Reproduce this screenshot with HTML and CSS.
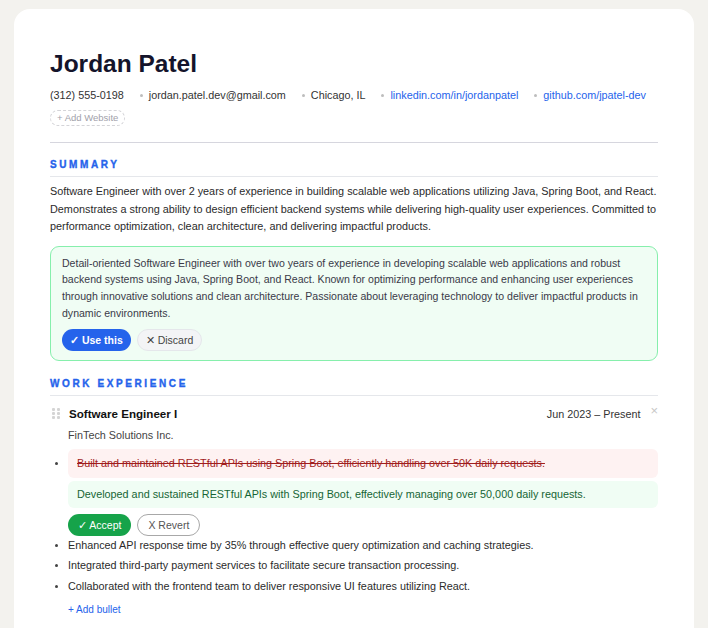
FILE: index.html
```html
<!DOCTYPE html>
<html>
<head>
<meta charset="utf-8">
<link rel="stylesheet" href="styles.css">
</head>
<body>
<div class="card">
  <h1 class="name">Jordan Patel</h1>
  <div class="contact">
    <span class="ci first">(312) 555-0198</span>
    <span class="ci">jordan.patel.dev@gmail.com</span>
    <span class="ci">Chicago, IL</span>
    <span class="ci link">linkedin.com/in/jordanpatel</span>
    <span class="ci link">github.com/jpatel-dev</span>
  </div>
  <div class="addsite">+ Add Website</div>
  <div class="rule"></div>

  <h2 class="sec">SUMMARY</h2>
  <p class="summary">Software Engineer with over 2 years of experience in building scalable web applications utilizing Java, Spring Boot, and React. Demonstrates a strong ability to design efficient backend systems while delivering high-quality user experiences. Committed to performance optimization, clean architecture, and delivering impactful products.</p>

  <div class="suggest">
    <p class="sug-text">Detail-oriented Software Engineer with over two years of experience in developing scalable web applications and robust backend systems using Java, Spring Boot, and React. Known for optimizing performance and enhancing user experiences through innovative solutions and clean architecture. Passionate about leveraging technology to deliver impactful products in dynamic environments.</p>
    <div class="btns">
      <span class="btn use">✓ Use this</span>
      <span class="btn discard">✕ Discard</span>
    </div>
  </div>

  <h2 class="sec">WORK EXPERIENCE</h2>
  <div class="job">
    <div class="job-head">
      <span class="grip"><i></i><i></i><i></i><i></i><i></i><i></i></span>
      <span class="title">Software Engineer I</span>
      <span class="date">Jun 2023 – Present</span>
      <span class="close">×</span>
    </div>
    <div class="company">FinTech Solutions Inc.</div>
    <ul class="bullets">
      <li class="edit">
        <div class="old">Built and maintained RESTful APIs using Spring Boot, efficiently handling over 50K daily requests.</div>
        <div class="new">Developed and sustained RESTful APIs with Spring Boot, effectively managing over 50,000 daily requests.</div>
        <div class="btns">
          <span class="btn accept">✓ Accept</span>
          <span class="btn revert">X Revert</span>
        </div>
      </li>
      <li>Enhanced API response time by 35% through effective query optimization and caching strategies.</li>
      <li>Integrated third-party payment services to facilitate secure transaction processing.</li>
      <li>Collaborated with the frontend team to deliver responsive UI features utilizing React.</li>
    </ul>
    <div class="addbullet">+ Add bullet</div>
  </div>
</div>
</body>
</html>
```

FILE: styles.css
```css
* { box-sizing: border-box; }
html, body { margin: 0; padding: 0; }
body {
  background: #f3f2ee;
  font-family: "Liberation Sans", Arial, sans-serif;
  color: #2b2b2b;
  height: 628px;
  overflow: hidden;
}
.card {
  margin: 9px 14px 0 14px;
  background: #ffffff;
  border-radius: 16px;
  padding: 41px 36px 40px 36px;
  min-height: 700px;
}
.name {
  margin: 0;
  font-size: 24.5px;
  line-height: 28px;
  font-weight: 700;
  color: #14142b;
}
.contact {
  display: flex;
  flex-wrap: wrap;
  gap: 16px;
  margin-top: 10px;
  font-size: 10.8px;
  line-height: 14px;
  color: #333;
  white-space: nowrap;
}
.ci { display: inline-flex; align-items: center; }
.ci:not(.first)::before {
  content: "";
  width: 3px;
  height: 3px;
  border-radius: 50%;
  background: #bdbdbd;
  margin-right: 6px;
}
.link { color: #2563eb; }
.addsite {
  display: inline-block;
  margin-top: 8px;
  border: 1px dashed #d4d4d8;
  border-radius: 9px;
  font-size: 9.5px;
  line-height: 14px;
  padding: 0 6px;
  color: #a1a1aa;
}
.rule {
  height: 1px;
  background: #d6d6de;
  margin-top: 16px;
}
.sec {
  margin: 16px 0 0 0;
  font-size: 10px;
  line-height: 12px;
  font-weight: 900;
  letter-spacing: 2.6px;
  color: #2563eb;
  -webkit-text-stroke: 0.35px #2563eb;
  padding-bottom: 5px;
  border-bottom: 1px solid #e5e7eb;
}
.summary {
  margin: 6px 0 0 0;
  font-size: 10.85px;
  line-height: 17.5px;
  color: #2b2b2b;
}
.suggest {
  margin-top: 10px;
  border: 1px solid #86efac;
  background: #f0fdf4;
  border-radius: 9px;
  padding: 8px 11px 9px 11px;
}
.sug-text {
  margin: 0;
  font-size: 10.55px;
  line-height: 16.8px;
  color: #3a3a48;
}
.btns {
  display: flex;
  gap: 6px;
  margin-top: 7px;
}
.btn {
  display: inline-block;
  font-size: 10.5px;
  line-height: 20px;
  border-radius: 11px;
  padding: 0 10px;
  border: 1px solid transparent;
}
.use { background: #2563eb; color: #fff; font-weight: 700; padding: 0 7px; }
.discard { background: #f3f4f6; border-color: #e5e7eb; color: #444; padding: 0 8px; }
.suggest + .sec { margin-top: 17px; }
.job { margin-top: 9px; }
.job-head {
  display: flex;
  align-items: center;
  height: 18px;
}
.grip {
  display: grid;
  grid-template-columns: 3px 3px;
  gap: 1.5px 2px;
  width: 19px;
  padding-left: 2px;
}
.grip i { display: block; width: 3px; height: 2.5px; background: #d4d4d4; border-radius: 1px; }
.title { font-size: 11.6px; font-weight: 700; color: #111; flex: 1; }
.date { font-size: 10.8px; color: #333; }
.close { font-size: 13px; color: #c7c7c7; margin-left: 10px; position: relative; top: -3px; }
.company {
  margin: 4px 0 0 18px;
  font-size: 10.8px;
  line-height: 17px;
  color: #444;
}
.bullets {
  margin: 5px 0 0 0;
  padding: 0 0 0 18px;
  font-size: 10.8px;
  color: #2b2b2b;
}
.bullets li { line-height: 16px; margin-bottom: 4.5px; }
.bullets li.edit { margin-bottom: 1px; }
.bullets li::marker { color: #444; font-size: 10px; }
.old {
  background: #fef2f2;
  border-radius: 6px;
  padding: 6px 9px 7px 9px;
  line-height: 16px;
  color: #a11d1d;
  text-decoration: line-through;
}
.new {
  margin-top: 3px;
  background: #f0fdf4;
  border-radius: 6px;
  padding: 5px 9px 6px 9px;
  line-height: 16px;
  color: #166534;
}
.edit .btns { margin-top: 6px; }
.accept { background: #16a34a; color: #fff; line-height: 20px; padding: 0 9px; }
.revert { background: #fff; border-color: #a8a8a8; color: #555; line-height: 20px; padding: 0 10px; }
.addbullet {
  margin: 10px 0 0 18px;
  font-size: 10px;
  color: #2563eb;
}
```
